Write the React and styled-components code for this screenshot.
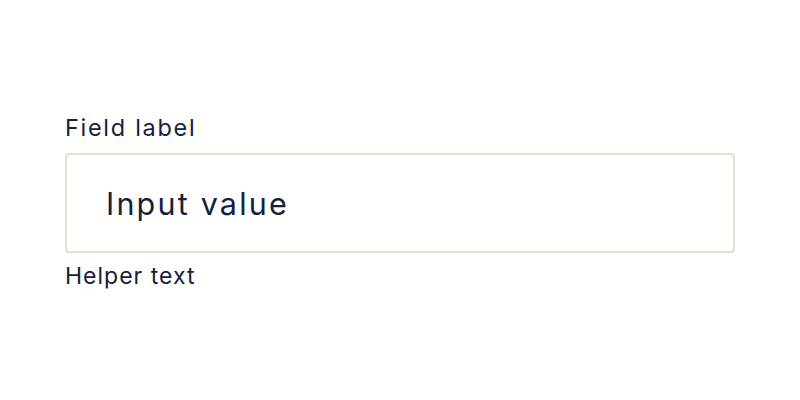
import React from "react";
import styled, { createGlobalStyle } from "styled-components";

const Global = createGlobalStyle`
  html, body { margin: 0; padding: 0; background: #ffffff; }
  body { font-family: Inter, "Noto Sans", sans-serif; color: #14213a; }
`;

const Page = styled.div`
  width: 800px;
  height: 400px;
  padding: 113px 65px 0;
  box-sizing: border-box;
`;

const Field = styled.div`
  display: flex;
  flex-direction: column;
`;

const Label = styled.label`
  font-size: 23.5px;
  line-height: 30px;
  letter-spacing: 1.7px;
  color: #14213a;
  margin-bottom: 10px;
`;

const Input = styled.input`
  box-sizing: border-box;
  width: 100%;
  height: 100px;
  border: 2px solid #dde3cb;
  border-radius: 4px;
  padding: 0 39px 0;
  font-family: Inter, "Noto Sans", sans-serif;
  font-size: 30.5px;
  letter-spacing: 2.2px;
  color: #14213a;
  background: #fff;
  outline: none;
`;

const Helper = styled.div`
  font-size: 23px;
  line-height: 28px;
  letter-spacing: 1px;
  color: #14213a;
  margin-top: 9px;
`;

export default function App() {
  return (
    <>
      <Global />
      <Page>
        <Field>
          <Label htmlFor="f">Field label</Label>
          <Input id="f" defaultValue="Input value" />
          <Helper>Helper text</Helper>
        </Field>
      </Page>
    </>
  );
}
